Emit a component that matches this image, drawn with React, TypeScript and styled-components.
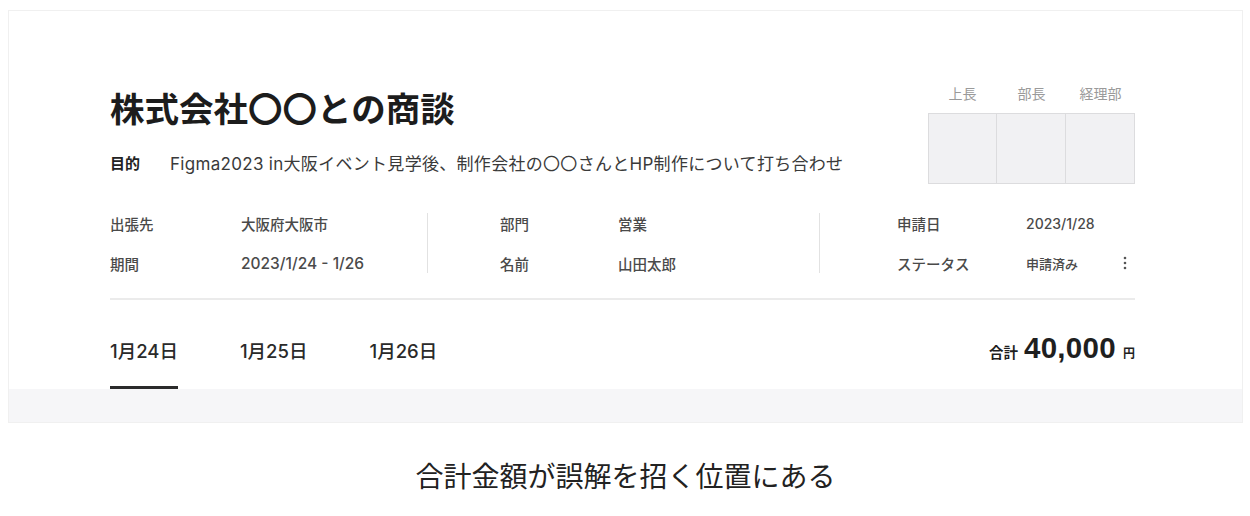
import React from "react";
import styled, { createGlobalStyle } from "styled-components";

const FONT = `Inter, "Noto Sans CJK JP", "Noto Sans", sans-serif`;

const GlobalStyle = createGlobalStyle`
  body {
    margin: 0;
    background: #ffffff;
    font-family: ${FONT};
    color: #333;
  }
`;

const Page = styled.div`
  width: 1250px;
  padding: 10px 7px 0 8px;
  box-sizing: border-box;
`;

const Card = styled.div`
  border: 1px solid #f0f0f0;
  background: #fff;
`;

const CardBody = styled.div`
  padding: 76px 107px 0 101px;
`;

const Header = styled.div`
  display: flex;
  justify-content: space-between;
  align-items: flex-start;
`;

const Title = styled.h1`
  margin: 0;
  font-size: 34.5px;
  line-height: 46px;
  font-weight: 700;
  color: #1c1c1c;
`;

const Purpose = styled.div`
  display: flex;
  align-items: center;
  margin-top: 19px;
  line-height: 24px;
`;

const PurposeLabel = styled.span`
  font-size: 15px;
  font-weight: 700;
  color: #222;
  margin-right: 30px;
`;

const PurposeText = styled.span`
  font-size: 17px;
  letter-spacing: 0.3px;
  color: #3a3a3a;
`;

const Approvals = styled.div`
  display: grid;
  grid-template-columns: repeat(3, 69px);
  margin-top: -2px;
`;

const ApprovalLabel = styled.div`
  text-align: center;
  font-size: 14px;
  line-height: 18px;
  color: #9a9a9a;
  padding-bottom: 10px;
`;

const StampBox = styled.div<{ $first?: boolean }>`
  height: 69px;
  background: #f1f1f3;
  border: 1px solid #dcdcde;
  border-left-width: ${(p) => (p.$first ? "1px" : "0")};
`;

const InfoRow = styled.div`
  display: flex;
  margin-top: 19px;
  padding-bottom: 15px;
  border-bottom: 2px solid #ebebeb;
`;

const Group = styled.div<{ $width: number; $indent: number; $divider?: boolean }>`
  width: ${(p) => p.$width}px;
  padding-left: ${(p) => p.$indent}px;
  box-sizing: border-box;
  position: relative;
  ${(p) =>
    p.$divider
      ? `
    &::after {
      content: "";
      position: absolute;
      right: 0;
      top: 10px;
      bottom: 10px;
      width: 1px;
      background: #e2e2e2;
    }
  `
      : ""}
`;

const Field = styled.div<{ $labelWidth: number }>`
  display: grid;
  grid-template-columns: ${(p) => p.$labelWidth}px 1fr auto;
  align-items: center;
  height: 40px;
  font-size: 14.5px;
  font-weight: 500;
  color: #4a4a4a;
`;

const Value = styled.span<{ $size?: number }>`
  font-size: ${(p) => p.$size ?? 14.5}px;
`;

const Kebab = styled.svg`
  margin-right: 8px;
`;

const TabBar = styled.div`
  display: flex;
  align-items: flex-end;
  justify-content: space-between;
`;

const Tabs = styled.div`
  display: flex;
  gap: 62px;
`;

const Tab = styled.div<{ $active?: boolean }>`
  padding-top: 38px;
  padding-bottom: 22px;
  font-size: 18.5px;
  line-height: 26px;
  font-weight: 500;
  color: #2a2a2a;
  border-bottom: 3px solid ${(p) => (p.$active ? "#2b2b2b" : "transparent")};
`;

const Total = styled.div`
  display: flex;
  align-items: baseline;
  padding-bottom: 24px;
  color: #1f1f1f;
  font-weight: 700;
`;

const TotalLabel = styled.span`
  font-size: 14.5px;
  margin-right: 6px;
`;

const TotalAmount = styled.span`
  font-family: "Liberation Sans", Arial, sans-serif;
  font-size: 29.5px;
  letter-spacing: 0.3px;
  margin-right: 7px;
`;

const TotalUnit = styled.span`
  font-size: 12px;
`;

const Band = styled.div`
  height: 33px;
  background: #f6f6f8;
`;

const Caption = styled.p`
  margin: 35px 0 0;
  text-align: center;
  font-size: 28px;
  line-height: 38px;
  font-weight: 400;
  color: #222;
`;

const KebabIcon = () => (
  <Kebab width="4" height="14" viewBox="0 0 4 14">
    <circle cx="2" cy="2" r="1.3" fill="#555" />
    <circle cx="2" cy="7" r="1.3" fill="#555" />
    <circle cx="2" cy="12" r="1.3" fill="#555" />
  </Kebab>
);

const approvers = ["上長", "部長", "経理部"];
const tabs = ["1月24日", "1月25日", "1月26日"];

export default function App() {
  return (
    <>
      <GlobalStyle />
      <Page>
        <Card>
          <CardBody>
            <Header>
              <div>
                <Title>株式会社〇〇との商談</Title>
                <Purpose>
                  <PurposeLabel>目的</PurposeLabel>
                  <PurposeText>
                    Figma2023 in大阪イベント見学後、制作会社の〇〇さんとHP制作について打ち合わせ
                  </PurposeText>
                </Purpose>
              </div>
              <Approvals>
                {approvers.map((a) => (
                  <ApprovalLabel key={a}>{a}</ApprovalLabel>
                ))}
                {approvers.map((a, i) => (
                  <StampBox key={a} $first={i === 0} />
                ))}
              </Approvals>
            </Header>

            <InfoRow>
              <Group $width={318} $indent={0} $divider>
                <Field $labelWidth={131}>
                  <span>出張先</span>
                  <Value>大阪府大阪市</Value>
                </Field>
                <Field $labelWidth={131}>
                  <span>期間</span>
                  <Value $size={15.5}>2023/1/24 - 1/26</Value>
                </Field>
              </Group>
              <Group $width={392} $indent={72} $divider>
                <Field $labelWidth={118}>
                  <span>部門</span>
                  <Value>営業</Value>
                </Field>
                <Field $labelWidth={118}>
                  <span>名前</span>
                  <Value>山田太郎</Value>
                </Field>
              </Group>
              <Group $width={315} $indent={77}>
                <Field $labelWidth={129}>
                  <span>申請日</span>
                  <Value $size={14}>2023/1/28</Value>
                </Field>
                <Field $labelWidth={129}>
                  <span>ステータス</span>
                  <Value $size={13}>申請済み</Value>
                  <KebabIcon />
                </Field>
              </Group>
            </InfoRow>

            <TabBar>
              <Tabs>
                {tabs.map((t, i) => (
                  <Tab key={t} $active={i === 0}>
                    {t}
                  </Tab>
                ))}
              </Tabs>
              <Total>
                <TotalLabel>合計</TotalLabel>
                <TotalAmount>40,000</TotalAmount>
                <TotalUnit>円</TotalUnit>
              </Total>
            </TabBar>
          </CardBody>
          <Band />
        </Card>
        <Caption>合計金額が誤解を招く位置にある</Caption>
      </Page>
    </>
  );
}
